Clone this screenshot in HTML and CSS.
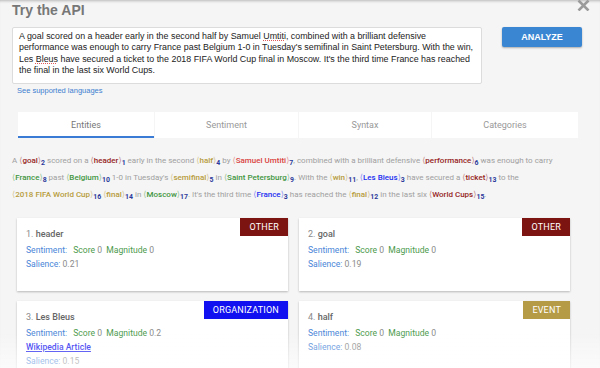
FILE: index.html
```html
<!DOCTYPE html>
<html lang="en">
<head>
    <meta charset="UTF-8">
    <meta name="viewport" content="width=device-width, initial-scale=1.0">
    <title>Try the API</title>
    <link rel="stylesheet" href="styles.css">
</head>
<body>
    <div class="panel">
        <div class="panel-head">
            <h2>Try the API</h2>
            <svg class="close" width="13" height="11" viewBox="0 0 13 11">
                <path d="M1.5 0.5 L11.5 10.5 M11.5 0.5 L1.5 10.5" stroke="#9b9b9b" stroke-width="2.6" fill="none"/>
            </svg>
        </div>

        <div class="input-row">
            <div class="text-input">A goal scored on a header early in the second half by Samuel <span class="spell">Umtiti</span>, combined with a brilliant defensive<br>performance was enough to carry France past Belgium 1-0 in Tuesday's semifinal in Saint Petersburg. With the win, Les <span class="spell">Bleus</span> have secured a ticket to the 2018 FIFA World Cup final in Moscow. It's the third time France has reached the final in the last six World Cups.</div>
            <button class="analyze">ANALYZE</button>
        </div>
        <a class="langs" href="#">See supported languages</a>

        <div class="tabs">
            <div class="tab active">Entities</div>
            <div class="tab">Sentiment</div>
            <div class="tab">Syntax</div>
            <div class="tab">Categories</div>
        </div>

        <p class="annotated">
            A <span class="ent other"><b>goal</b><sub>2</sub></span> scored on a <span class="ent other"><b>header</b><sub>1</sub></span> early in the second <span class="ent event"><b>half</b><sub>4</sub></span> by <span class="ent person"><b>Samuel Umtiti</b><sub>7</sub></span>, combined with a brilliant defensive <span class="ent other"><b>performance</b><sub>6</sub></span> was enough to carry
            <span class="ent location"><b>France</b><sub>8</sub></span> past <span class="ent location"><b>Belgium</b><sub>10</sub></span> 1-0 in Tuesday's <span class="ent event"><b>semifinal</b><sub>5</sub></span> in <span class="ent location"><b>Saint Petersburg</b><sub>9</sub></span>. With the <span class="ent event"><b>win</b><sub>11</sub></span>, <span class="ent org"><b>Les Bleus</b><sub>3</sub></span> have secured a <span class="ent other"><b>ticket</b><sub>13</sub></span> to the
            <span class="ent event"><b>2018 FIFA World Cup</b><sub>16</sub></span> <span class="ent event"><b>final</b><sub>14</sub></span> in <span class="ent location"><b>Moscow</b><sub>17</sub></span>. It's the third time <span class="ent org"><b>France</b><sub>3</sub></span> has reached the <span class="ent event"><b>final</b><sub>12</sub></span> in the last six <span class="ent other"><b>World Cups</b><sub>15</sub></span>.
        </p>

        <div class="cards">
            <div class="card">
                <span class="badge b-other">OTHER</span>
                <div class="card-title">1. <b>header</b></div>
                <div class="row"><span class="label wide">Sentiment:</span> <span class="key">Score</span> 0 &nbsp;<span class="key">Magnitude</span> 0</div>
                <div class="row"><span class="label">Salience:</span> 0.21</div>
            </div>
            <div class="card">
                <span class="badge b-other">OTHER</span>
                <div class="card-title">2. <b>goal</b></div>
                <div class="row"><span class="label wide">Sentiment:</span> <span class="key">Score</span> 0 &nbsp;<span class="key">Magnitude</span> 0</div>
                <div class="row"><span class="label">Salience:</span> 0.19</div>
            </div>
            <div class="card">
                <span class="badge b-org">ORGANIZATION</span>
                <div class="card-title">3. <b>Les Bleus</b></div>
                <div class="row"><span class="label wide">Sentiment:</span> <span class="key">Score</span> 0 &nbsp;<span class="key">Magnitude</span> 0.2</div>
                <div class="row"><a class="wiki" href="#">Wikipedia Article</a></div>
                <div class="row"><span class="label">Salience:</span> 0.15</div>
            </div>
            <div class="card">
                <span class="badge b-event">EVENT</span>
                <div class="card-title">4. <b>half</b></div>
                <div class="row"><span class="label wide">Sentiment:</span> <span class="key">Score</span> 0 &nbsp;<span class="key">Magnitude</span> 0</div>
                <div class="row"><span class="label">Salience:</span> 0.08</div>
            </div>
        </div>
    </div>
    <div class="fade"></div>
</body>
</html>
```

FILE: styles.css
```css
body {
    font-family: Roboto, "Liberation Sans", Arial, sans-serif;
    background-color: #f5f5f5;
    margin: 0;
    color: #9e9e9e;
    overflow: hidden;
    height: 368px;
    box-shadow: inset 0 3px 3px -2px rgba(0, 0, 0, 0.25);
}
.panel {
    padding: 0 12px;
}
.panel-head {
    display: flex;
    justify-content: space-between;
    align-items: flex-start;
    height: 27px;
}
h2 {
    font-family: "Liberation Sans", Arial, sans-serif;
    font-size: 14px;
    font-weight: bold;
    color: #777;
    margin: 2px 0 0;
}
.close {
    margin-right: -2px;
}
.input-row {
    display: flex;
    align-items: flex-start;
}
.text-input {
    width: 461px;
    height: 50px;
    padding: 3px 1px 2px 6px;
    background-color: #fff;
    border: 1px solid #dcdcdc;
    border-radius: 2px;
    font-family: "Liberation Sans", Arial, sans-serif;
    font-size: 8.9px;
    line-height: 11.4px;
    color: #222;
}
.spell {
    text-decoration: underline dotted #e05a5a;
    text-decoration-thickness: 1px;
    text-underline-offset: 1px;
}
.analyze {
    margin-left: 20px;
    width: 80px;
    height: 20px;
    border: none;
    border-radius: 2px;
    background-color: #3b86d3;
    color: #fff;
    font-family: "Liberation Sans", Arial, sans-serif;
    font-size: 9px;
    font-weight: bold;
    box-shadow: 0 1px 2px rgba(0, 0, 0, 0.3);
}
.langs {
    display: block;
    width: 120px;
    margin: 2px 0 0 5px;
    height: 10px;
    line-height: 10px;
    font-family: "Liberation Sans", Arial, sans-serif;
    font-size: 7.5px;
    color: #3d7fd0;
    text-decoration: none;
}
.tabs {
    display: grid;
    grid-template-columns: 136px 143px 132px 146px;
    gap: 1px;
    margin: 16px 0 0 6px;
    width: 561px;
}
.tab {
    background-color: #fff;
    height: 26px;
    line-height: 26px;
    text-align: center;
    font-size: 9px;
    color: #999;
}
.tab.active {
    color: #777;
    height: 24px;
    border-bottom: 2px solid #3a7bd5;
}
.annotated {
    margin: 14px 0 0;
    font-size: 8px;
    line-height: 17px;
    color: #a0a0a0;
}
.ent {
    white-space: nowrap;
}
.ent b {
    font-weight: 500;
}
.ent b::before,
.ent b::after {
    font-family: "DejaVu Sans", sans-serif;
    font-weight: 400;
    font-size: 8.2px;
    opacity: 0.55;
}
.ent b::before {
    content: "\27E8";
}
.ent b::after {
    content: "\27E9";
}
sub {
    font-size: 6.9px;
    font-weight: bold;
    color: #2b3a9b;
    vertical-align: -2px;
    line-height: 0;
}
.other { color: #962524; }
.event { color: #b79c3c; }
.person { color: #d9443f; }
.location { color: #3f953f; }
.org { color: #1c2ff0; }
.cards {
    display: grid;
    grid-template-columns: 271px 271px;
    column-gap: 11px;
    row-gap: 10px;
    margin: 15px 0 0 5px;
}
.card {
    position: relative;
    background-color: #fff;
    height: 73px;
    padding: 0 9px;
    box-shadow: 0 1px 2px rgba(0, 0, 0, 0.25);
    font-size: 8.6px;
    color: #8a8a8a;
}
.card-title {
    padding-top: 9px;
    height: 14px;
    line-height: 14px;
    margin-bottom: 2px;
    font-size: 9px;
    color: #8a8a8a;
}
.card-title b {
    font-weight: 500;
    color: #666;
}
.row {
    height: 14px;
    line-height: 14px;
}
.label {
    color: #4a86d8;
}
.label.wide {
    margin-right: 4px;
}
.key {
    color: #4c9a4c;
}
.wiki {
    color: #1a1aef;
    font-weight: 500;
    text-decoration: underline;
}
.badge {
    position: absolute;
    top: 0;
    right: 0;
    height: 18px;
    line-height: 18px;
    padding: 0 9px;
    color: #fff;
    font-size: 9px;
    letter-spacing: 0.2px;
}
.b-other { background-color: #7c1411; }
.b-org { background-color: #1010f0; }
.b-event { background-color: #b59b45; }
.fade {
    position: fixed;
    left: 0;
    right: 0;
    bottom: 0;
    height: 36px;
    background: linear-gradient(rgba(255, 255, 255, 0), rgba(255, 255, 255, 0.6));
}
```
